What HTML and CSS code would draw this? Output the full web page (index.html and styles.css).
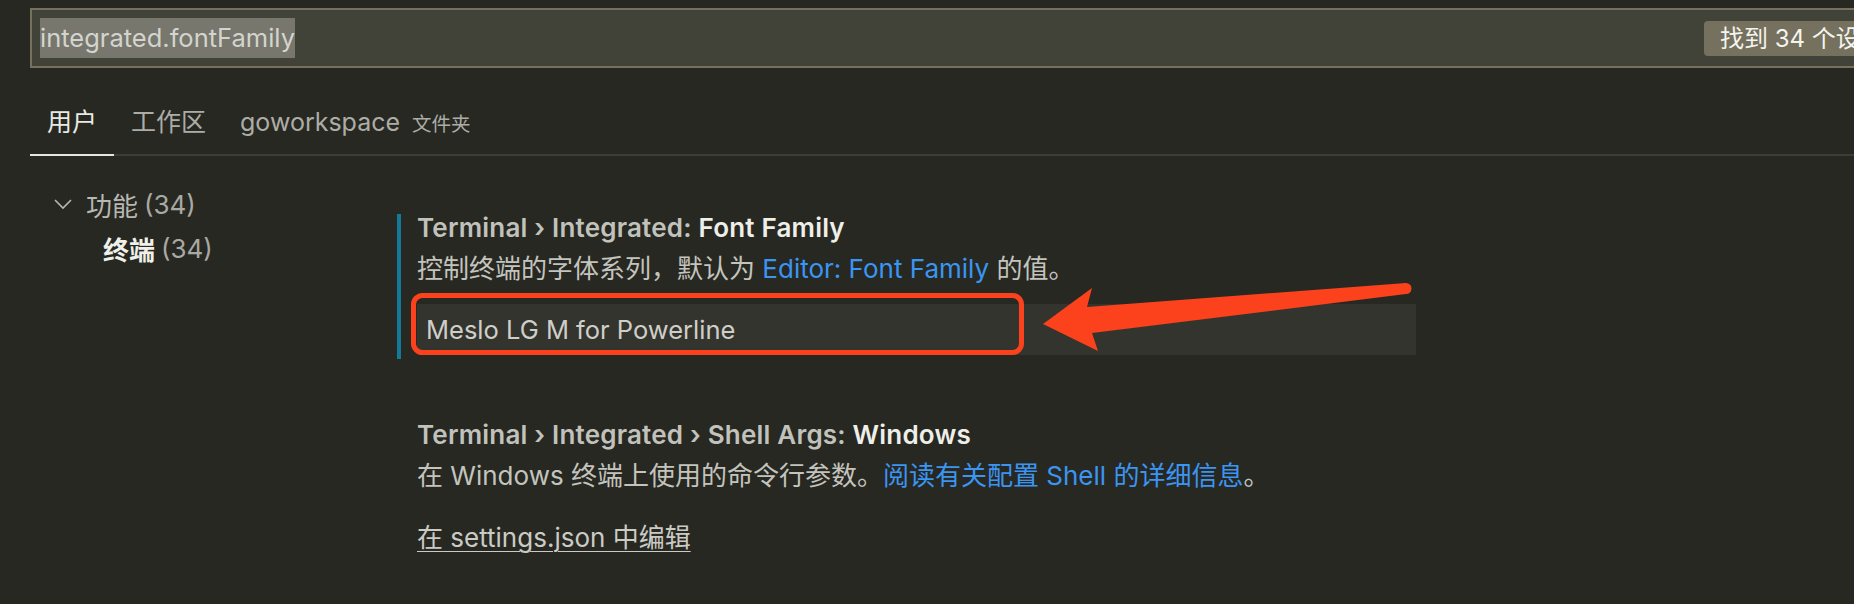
FILE: index.html
```html
<!DOCTYPE html>
<html lang="zh-CN">
<head>
<meta charset="utf-8">
<title>Settings</title>
<link rel="stylesheet" href="styles.css">
</head>
<body>
<div class="page">
  <div class="search">
    <span class="search-text">integrated.fontFamily</span>
    <span class="badge">找到 34 个设置</span>
  </div>
  <div class="tabs">
    <div class="tab active">用户</div>
    <div class="tab">工作区</div>
    <div class="tab">goworkspace <span class="tab-sub">文件夹</span></div>
  </div>
  <div class="main">
    <nav class="toc">
      <div class="toc-item">
        <svg class="chev" width="18" height="12" viewBox="0 0 18 12"><path d="M1 2 L9 10 L17 2" fill="none" stroke="#b8b8b2" stroke-width="1.6"/></svg>
        <span>功能</span><span class="count">(34)</span>
      </div>
      <div class="toc-item child"><span class="strong">终端</span><span class="count">(34)</span></div>
    </nav>
    <section class="settings">
      <div class="setting focused">
        <div class="title">Terminal › Integrated: <span class="name">Font Family</span></div>
        <div class="desc">控制终端的字体系列，默认为 <span class="link">Editor: Font Family</span> 的值。</div>
        <div class="input">Meslo LG M for Powerline</div>
      </div>
      <div class="setting second">
        <div class="title">Terminal › Integrated › Shell Args: <span class="name">Windows</span></div>
        <div class="desc">在 Windows 终端上使用的命令行参数。<span class="link">阅读有关配置 Shell 的详细信息</span>。</div>
        <div class="edit-link">在 settings.json 中编辑</div>
      </div>
    </section>
  </div>
  <svg class="annot" width="1854" height="604" viewBox="0 0 1854 604">
    <rect x="413.5" y="295.5" width="608" height="57" rx="9" ry="9" fill="none" stroke="#fc421c" stroke-width="5"/>
    <polygon points="1043,324 1092,288 1087,307 1406,283 1406,294 1092,333 1098,351" fill="#fc421c"/>
    <circle cx="1406" cy="288.5" r="5.5" fill="#fc421c"/>
  </svg>
</div>
</body>
</html>
```

FILE: styles.css
```css
html, body {
  margin: 0;
  padding: 0;
  background: #272822;
  overflow: hidden;
}

.page {
  position: relative;
  width: 1854px;
  height: 604px;
  overflow: hidden;
  font-family: "Inter", "Noto Sans CJK SC", sans-serif;
  color: #c4c4be;
}

.search {
  box-sizing: border-box;
  margin: 8px 0 0 30px;
  width: 1890px;
  height: 60px;
  border: 2px solid #75715e;
  background: #414339;
  display: flex;
  align-items: center;
  padding: 0 8px;
}

.search-text {
  background: #77776d;
  color: #d4d4ce;
  font-size: 25.5px;
  line-height: 40px;
  height: 40px;
}

.badge {
  margin-left: auto;
  width: 190px;
  height: 35px;
  border-radius: 4px;
  background: #75715e;
  color: #f4f4ee;
  font-size: 24px;
  line-height: 35px;
  padding-left: 16px;
  white-space: nowrap;
  overflow: hidden;
}

.tabs {
  display: flex;
  margin-left: 30px;
  border-bottom: 2px solid #3d3d37;
}

.tab {
  padding: 34px 17px 10px;
  font-size: 25px;
  line-height: 40px;
  color: #adada7;
  margin-bottom: -2px;
  border-bottom: 2px solid transparent;
  white-space: nowrap;
}

.tab.active {
  color: #e9e9e4;
  border-bottom-color: #e6e6e1;
}

.tab-sub {
  font-size: 19.5px;
  margin-left: 5px;
}

.main {
  display: flex;
}

.toc {
  box-sizing: border-box;
  width: 367px;
  margin-left: 30px;
  padding: 26px 0 0 24px;
  flex: none;
}

.toc-item {
  display: flex;
  align-items: center;
  height: 44px;
  font-size: 26px;
  color: #b8b8b2;
}

.chev {
  margin-right: 14px;
  flex: none;
}

.toc-item.child {
  padding-left: 49px;
}

.count {
  margin-left: 6px;
  color: #a9a9a3;
}

.strong {
  color: #f0f0ea;
  font-weight: 700;
}

.settings {
  flex: 1;
  padding-top: 58px;
}

.setting {
  border-left: 4px solid transparent;
  padding-left: 16px;
}

.setting.focused {
  border-left-color: #147a99;
  padding-bottom: 4px;
}

.setting.second {
  margin-top: 62px;
}

.title {
  font-size: 26px;
  line-height: 28px;
  font-weight: 600;
  letter-spacing: 0.2px;
  color: #c2c2bc;
  white-space: nowrap;
}

.title .name {
  color: #efefe9;
}

.desc {
  margin-top: 12px;
  font-size: 26px;
  line-height: 30px;
  color: #c4c4be;
  white-space: nowrap;
}

.link {
  color: #3b95f2;
}

.input {
  box-sizing: border-box;
  margin-top: 20px;
  width: 999px;
  height: 51px;
  background: #34342e;
  color: #cfcfc9;
  font-size: 25.5px;
  line-height: 51px;
  padding-left: 9px;
}

.edit-link {
  margin-top: 32px;
  font-size: 26px;
  line-height: 30px;
  color: #cbcbc5;
  text-decoration: underline;
  text-underline-offset: 4px;
  text-decoration-thickness: 1px;
}

.annot {
  position: absolute;
  left: 0;
  top: 0;
  pointer-events: none;
}
```
